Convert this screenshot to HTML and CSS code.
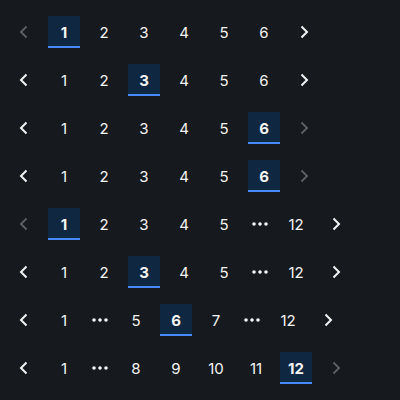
FILE: index.html
```html
<!DOCTYPE html>
<html>
<head>
<meta charset="utf-8">
<link rel="stylesheet" href="styles.css">
</head>
<body>
<div class="stack">
  <nav class="pager">
    <button class="arrow disabled"><svg viewBox="0 0 16 16"><path d="M10.5 2.5L5 8l5.5 5.5"/></svg></button>
    <button class="page active">1</button>
    <button class="page">2</button>
    <button class="page">3</button>
    <button class="page">4</button>
    <button class="page">5</button>
    <button class="page">6</button>
    <button class="arrow"><svg viewBox="0 0 16 16"><path d="M5.5 2.5L11 8l-5.5 5.5"/></svg></button>
  </nav>
  <nav class="pager">
    <button class="arrow"><svg viewBox="0 0 16 16"><path d="M10.5 2.5L5 8l5.5 5.5"/></svg></button>
    <button class="page">1</button>
    <button class="page">2</button>
    <button class="page active">3</button>
    <button class="page">4</button>
    <button class="page">5</button>
    <button class="page">6</button>
    <button class="arrow"><svg viewBox="0 0 16 16"><path d="M5.5 2.5L11 8l-5.5 5.5"/></svg></button>
  </nav>
  <nav class="pager">
    <button class="arrow"><svg viewBox="0 0 16 16"><path d="M10.5 2.5L5 8l5.5 5.5"/></svg></button>
    <button class="page">1</button>
    <button class="page">2</button>
    <button class="page">3</button>
    <button class="page">4</button>
    <button class="page">5</button>
    <button class="page active">6</button>
    <button class="arrow disabled"><svg viewBox="0 0 16 16"><path d="M5.5 2.5L11 8l-5.5 5.5"/></svg></button>
  </nav>
  <nav class="pager">
    <button class="arrow"><svg viewBox="0 0 16 16"><path d="M10.5 2.5L5 8l5.5 5.5"/></svg></button>
    <button class="page">1</button>
    <button class="page">2</button>
    <button class="page">3</button>
    <button class="page">4</button>
    <button class="page">5</button>
    <button class="page active">6</button>
    <button class="arrow disabled"><svg viewBox="0 0 16 16"><path d="M5.5 2.5L11 8l-5.5 5.5"/></svg></button>
  </nav>
  <nav class="pager">
    <button class="arrow disabled"><svg viewBox="0 0 16 16"><path d="M10.5 2.5L5 8l5.5 5.5"/></svg></button>
    <button class="page active">1</button>
    <button class="page">2</button>
    <button class="page">3</button>
    <button class="page">4</button>
    <button class="page">5</button>
    <span class="ellipsis"><svg viewBox="0 0 24 8"><circle cx="6" cy="4" r="1.8"/><circle cx="12" cy="4" r="1.8"/><circle cx="18" cy="4" r="1.8"/></svg></span>
    <button class="page">12</button>
    <button class="arrow"><svg viewBox="0 0 16 16"><path d="M5.5 2.5L11 8l-5.5 5.5"/></svg></button>
  </nav>
  <nav class="pager">
    <button class="arrow"><svg viewBox="0 0 16 16"><path d="M10.5 2.5L5 8l5.5 5.5"/></svg></button>
    <button class="page">1</button>
    <button class="page">2</button>
    <button class="page active">3</button>
    <button class="page">4</button>
    <button class="page">5</button>
    <span class="ellipsis"><svg viewBox="0 0 24 8"><circle cx="6" cy="4" r="1.8"/><circle cx="12" cy="4" r="1.8"/><circle cx="18" cy="4" r="1.8"/></svg></span>
    <button class="page">12</button>
    <button class="arrow"><svg viewBox="0 0 16 16"><path d="M5.5 2.5L11 8l-5.5 5.5"/></svg></button>
  </nav>
  <nav class="pager">
    <button class="arrow"><svg viewBox="0 0 16 16"><path d="M10.5 2.5L5 8l5.5 5.5"/></svg></button>
    <button class="page">1</button>
    <span class="ellipsis"><svg viewBox="0 0 24 8"><circle cx="6" cy="4" r="1.8"/><circle cx="12" cy="4" r="1.8"/><circle cx="18" cy="4" r="1.8"/></svg></span>
    <button class="page">5</button>
    <button class="page active">6</button>
    <button class="page">7</button>
    <span class="ellipsis"><svg viewBox="0 0 24 8"><circle cx="6" cy="4" r="1.8"/><circle cx="12" cy="4" r="1.8"/><circle cx="18" cy="4" r="1.8"/></svg></span>
    <button class="page">12</button>
    <button class="arrow"><svg viewBox="0 0 16 16"><path d="M5.5 2.5L11 8l-5.5 5.5"/></svg></button>
  </nav>
  <nav class="pager">
    <button class="arrow"><svg viewBox="0 0 16 16"><path d="M10.5 2.5L5 8l5.5 5.5"/></svg></button>
    <button class="page">1</button>
    <span class="ellipsis"><svg viewBox="0 0 24 8"><circle cx="6" cy="4" r="1.8"/><circle cx="12" cy="4" r="1.8"/><circle cx="18" cy="4" r="1.8"/></svg></span>
    <button class="page">8</button>
    <button class="page">9</button>
    <button class="page">10</button>
    <button class="page">11</button>
    <button class="page active">12</button>
    <button class="arrow disabled"><svg viewBox="0 0 16 16"><path d="M5.5 2.5L11 8l-5.5 5.5"/></svg></button>
  </nav>
</div>
</body>
</html>
```
FILE: styles.css
```css
html, body {
  background: #16191e;
}
body {
  margin: 8px;
  font-family: Inter, "Liberation Sans", sans-serif;
}
.stack {
  display: flex;
  flex-direction: column;
}
.pager {
  display: flex;
  gap: 8px;
  padding: 8px 0;
  align-items: center;
}
.pager button {
  width: 32px;
  height: 32px;
  padding: 0;
  margin: 0;
  border: 0;
  background: transparent;
  color: #f4f4f4;
  font-family: inherit;
  font-size: 15px;
  display: flex;
  align-items: center;
  justify-content: center;
  box-sizing: border-box;
}
.arrow svg {
  width: 16px;
  height: 16px;
  fill: none;
  stroke: #f4f4f4;
  stroke-width: 2;
}
.arrow.disabled svg {
  stroke: #5a5d62;
}
.page.active {
  background: #0f2740;
  font-weight: 700;
  border-bottom: 2px solid #4589ff;
  padding-top: 2px;
}
.ellipsis {
  width: 24px;
  height: 32px;
  display: flex;
  align-items: center;
  justify-content: center;
}
.ellipsis svg {
  width: 24px;
  height: 8px;
  fill: #f4f4f4;
}
```
